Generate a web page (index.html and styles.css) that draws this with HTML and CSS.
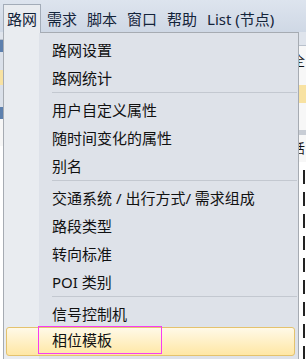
FILE: index.html
```html
<!DOCTYPE html>
<html lang="zh-CN">
<head>
    <meta charset="UTF-8">
    <title>路网菜单</title>
    <link rel="stylesheet" href="styles.css">
</head>
<body>
    <div class="app">
        <div class="menubar">
            <span class="menu-title open">路网</span>
            <span class="menu-title">需求</span>
            <span class="menu-title">脚本</span>
            <span class="menu-title">窗口</span>
            <span class="menu-title">帮助</span>
            <span class="menu-title">List (节点)</span>
        </div>

        <div class="workspace">
            <div class="side side-left">
                <div class="strip tool short"></div>
                <div class="strip blue"></div>
                <div class="strip grey"></div>
                <div class="strip yellow"></div>
                <div class="strip grey tall"></div>
                <div class="strip blue"></div>
                <div class="strip paper"></div>
            </div>
            <div class="side side-right">
                <div class="strip tool"></div>
                <div class="strip paper glyph first">全</div>
                <div class="strip yellow tall"></div>
                <div class="strip paper"></div>
                <div class="strip rule"></div>
                <div class="strip paper glyph">活</div>
                <div class="strip paper dashed"></div>
            </div>
        </div>

        <div class="dropdown">
            <div class="item">路网设置</div>
            <div class="item">路网统计</div>
            <div class="separator"></div>
            <div class="item">用户自定义属性</div>
            <div class="item">随时间变化的属性</div>
            <div class="item">别名</div>
            <div class="separator"></div>
            <div class="item">交通系统 / 出行方式/ 需求组成</div>
            <div class="item">路段类型</div>
            <div class="item">转向标准</div>
            <div class="item">POI 类别</div>
            <div class="separator"></div>
            <div class="item">信号控制机</div>
            <div class="item active">相位模板</div>
        </div>

        <div class="mark"></div>
    </div>
</body>
</html>
```

FILE: styles.css
```css
body {
    margin: 0;
    font-family: "Noto Sans", "Noto Sans CJK SC", sans-serif;
    font-size: 15px;
    color: #111;
}
.app {
    position: relative;
    width: 306px;
    height: 359px;
    overflow: hidden;
    background-color: #fff;
}
.menubar {
    display: flex;
    height: 32px;
    padding-left: 3px;
    box-sizing: border-box;
    background: linear-gradient(#dde4ee, #cfd8e5);
}
.menu-title {
    margin: 4px 2px 0 0;
    padding: 1px 3px 0;
    height: 27px;
    line-height: 27px;
    border: 1px solid transparent;
    border-bottom: none;
    color: #14243a;
    white-space: nowrap;
}
.menu-title.open {
    position: relative;
    z-index: 2;
    background-color: #e9ecf0;
    border-color: #a3acb8;
}

/* application behind the menu */
.workspace {
    display: flex;
    justify-content: space-between;
    height: 327px;
}
.side {
    display: flex;
    flex-direction: column;
}
.side-left {
    width: 3px;
}
.side-right {
    width: 7px;
}
.strip {
    height: 12px;
}
.strip.tool {
    height: 13px;
    background-color: #dfe4ec;
    border-bottom: 1px solid #b9c1cc;
}
.strip.tool.short {
    height: 7px;
}
.strip.blue {
    background-color: #5d80ae;
}
.strip.grey {
    height: 18px;
    background-color: #dbe1ea;
}
.strip.grey.tall {
    height: 22px;
}
.strip.yellow {
    height: 15px;
    background-color: #f8e2a2;
}
.strip.yellow.tall {
    height: 18px;
}
.strip.paper {
    height: 27px;
    background-color: #f7f7f7;
}
.strip.rule {
    height: 5px;
    background-color: #c8cdd5;
}
.strip.glyph {
    font-size: 13px;
    line-height: 26px;
    text-indent: -7px;
    overflow: hidden;
}
.strip.glyph.first {
    height: 39px;
    line-height: 28px;
}
.strip.dashed {
    flex: 1;
    background: repeating-linear-gradient(#fff 0 8px, #222 8px 22px) 4px 0 / 2px 100% no-repeat;
}

/* dropdown menu */
.dropdown {
    position: absolute;
    top: 32px;
    left: 3px;
    width: 296px;
    height: 340px;
    box-sizing: border-box;
    padding-top: 3px;
    border: 1px solid #a6abb2;
    background: linear-gradient(to right, #e9ecf0 0 35px, #dee2e9 35px);
    z-index: 1;
}
.item {
    height: 28px;
    line-height: 28px;
    margin: 0 3px 0 2px;
    padding-left: 46px;
    white-space: nowrap;
}
.item.active {
    height: 27px;
    line-height: 25px;
    margin-top: -1px;
    padding-left: 45px;
    border: 1px solid #e4c26d;
    border-radius: 3px;
    background: linear-gradient(#fff9e8, #ffe7a4);
}
.separator {
    height: 1px;
    margin: 0 1px 3px 48px;
    background-color: #c3c8d0;
}
.mark {
    position: absolute;
    top: 326px;
    left: 38px;
    width: 122px;
    height: 26px;
    border: 1px solid #f73cf2;
    z-index: 3;
}
```
